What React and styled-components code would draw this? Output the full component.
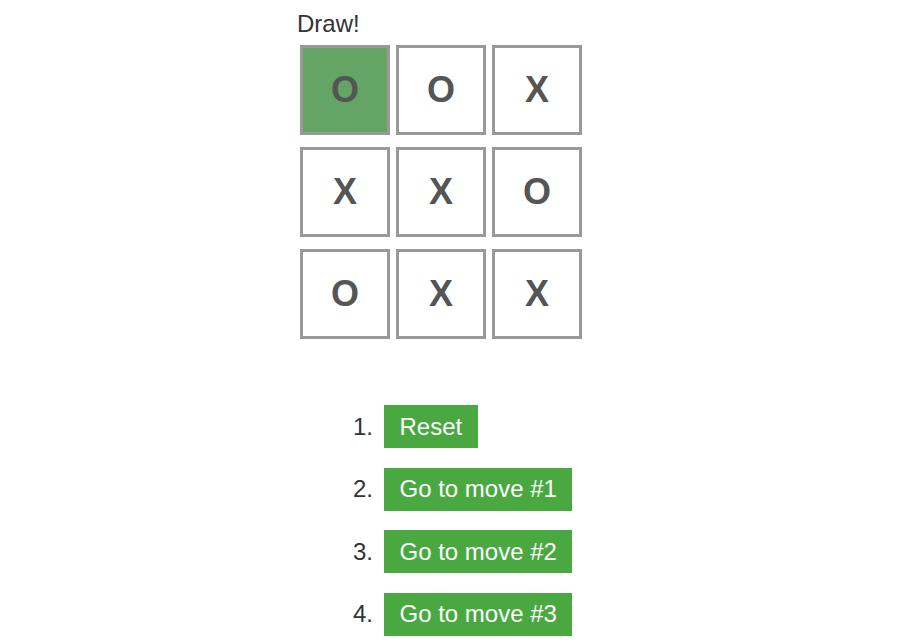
import React from "react";
import styled, { createGlobalStyle } from "styled-components";

const Global = createGlobalStyle`
  html, body { margin: 0; padding: 0; background: #fff; }
  body { font-family: "Liberation Sans", Arial, sans-serif; color: #333; }
`;

const Game = styled.div`
  display: flex;
  flex-direction: column;
  align-items: flex-start;
  padding: 10px 0 0 297px;
`;

const Status = styled.div`
  font-size: 24px;
  line-height: 27px;
  color: #333;
  margin-bottom: 8px;
`;

const Board = styled.div`
  display: grid;
  grid-template-columns: repeat(3, 90px);
  grid-auto-rows: 90px;
  column-gap: 6px;
  row-gap: 12px;
  margin-left: 3px;
`;

const Square = styled.button`
  box-sizing: border-box;
  width: 90px;
  height: 90px;
  margin: 0;
  padding: 0;
  border: 3px solid #999;
  background: ${(p) => (p.$win ? "#64a464" : "#fff")};
  color: #555;
  font-family: "Liberation Sans", Arial, sans-serif;
  font-weight: bold;
  font-size: 36px;
  line-height: 1;
  display: flex;
  align-items: center;
  justify-content: center;
  cursor: pointer;
`;

const Moves = styled.ol`
  list-style: none;
  margin: 66px 0 0 46px;
  padding: 0;
  display: flex;
  flex-direction: column;
  gap: 19.67px;
`;

const Move = styled.li`
  display: flex;
  align-items: center;
`;

const Num = styled.span`
  width: 30px;
  text-align: right;
  margin-right: 11px;
  font-size: 24px;
  color: #333;
`;

const MoveButton = styled.button`
  box-sizing: border-box;
  height: 43px;
  padding: 0 15.5px;
  border: none;
  background: #4aa841;
  color: #fff;
  font-family: "Liberation Sans", Arial, sans-serif;
  font-size: 24px;
  cursor: pointer;
`;

const cells = ["O", "O", "X", "X", "X", "O", "O", "X", "X"];
const moves = ["Reset", "Go to move #1", "Go to move #2", "Go to move #3"];

export default function App() {
  return (
    <>
      <Global />
      <Game>
        <Status>Draw!</Status>
        <Board>
          {cells.map((c, i) => (
            <Square key={i} $win={i === 0}>
              {c}
            </Square>
          ))}
        </Board>
        <Moves>
          {moves.map((m, i) => (
            <Move key={i}>
              <Num>{i + 1}.</Num>
              <MoveButton>{m}</MoveButton>
            </Move>
          ))}
        </Moves>
      </Game>
    </>
  );
}
